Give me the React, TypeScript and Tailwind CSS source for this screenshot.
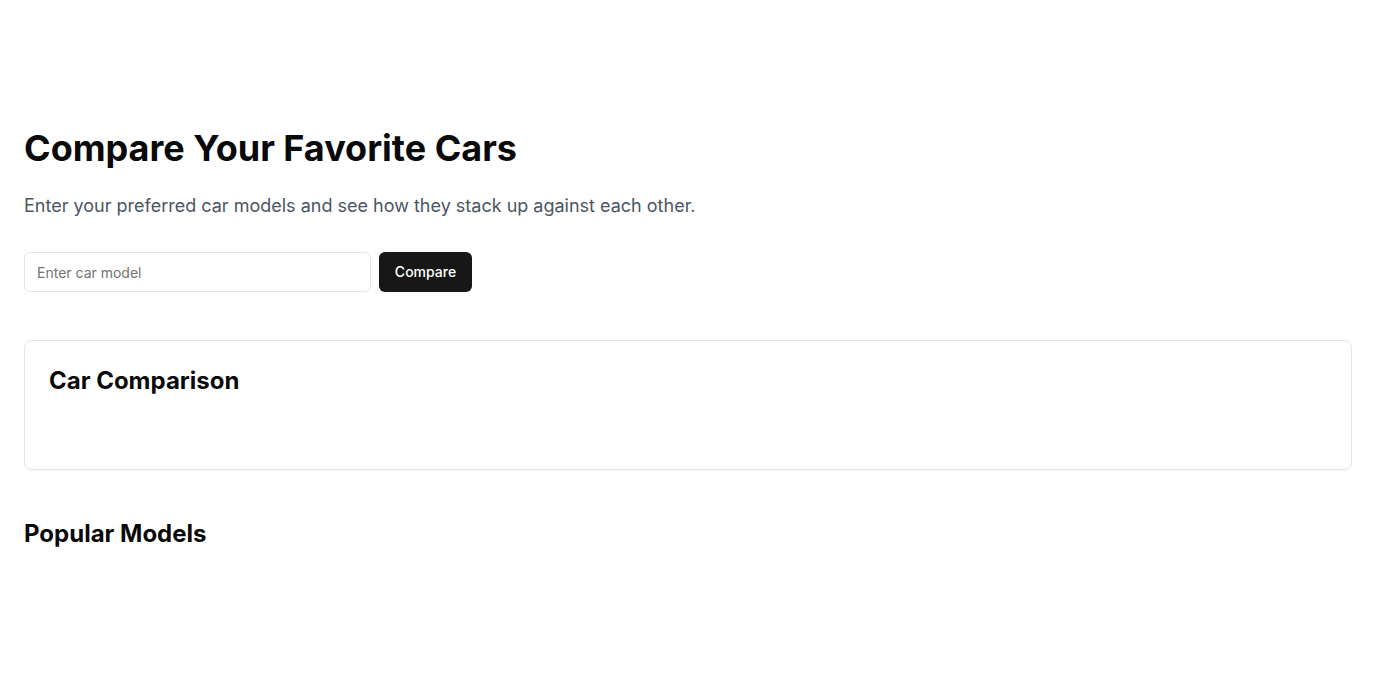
import React from "react";

export default function App() {
  return (
    <div className="min-h-screen bg-white font-['Inter',sans-serif] text-[#0a0a0a]">
      <div className="px-6 pt-32">
        <h1 className="mb-6 text-4xl font-bold leading-10">Compare Your Favorite Cars</h1>
        <p className="mb-8 text-lg leading-7 text-[#4b5563]">
          Enter your preferred car models and see how they stack up against each other.
        </p>
        <div className="flex gap-2">
          <input
            type="text"
            placeholder="Enter car model"
            className="h-10 w-[347px] rounded-md border border-[#e5e5e5] bg-white px-3 text-sm text-[#0a0a0a] placeholder:text-[#737373] outline-none"
          />
          <button className="h-10 w-[93px] rounded-md bg-[#171717] text-sm font-medium text-white">
            Compare
          </button>
        </div>
        <div className="mt-12 rounded-lg border border-[#e5e5e5] bg-white p-6 shadow-[0_1px_2px_rgba(0,0,0,0.04)]">
          <h2 className="text-2xl font-bold leading-8">Car Comparison</h2>
          <div className="h-12" />
        </div>
        <h2 className="mt-12 text-2xl font-bold leading-8">Popular Models</h2>
      </div>
    </div>
  );
}
